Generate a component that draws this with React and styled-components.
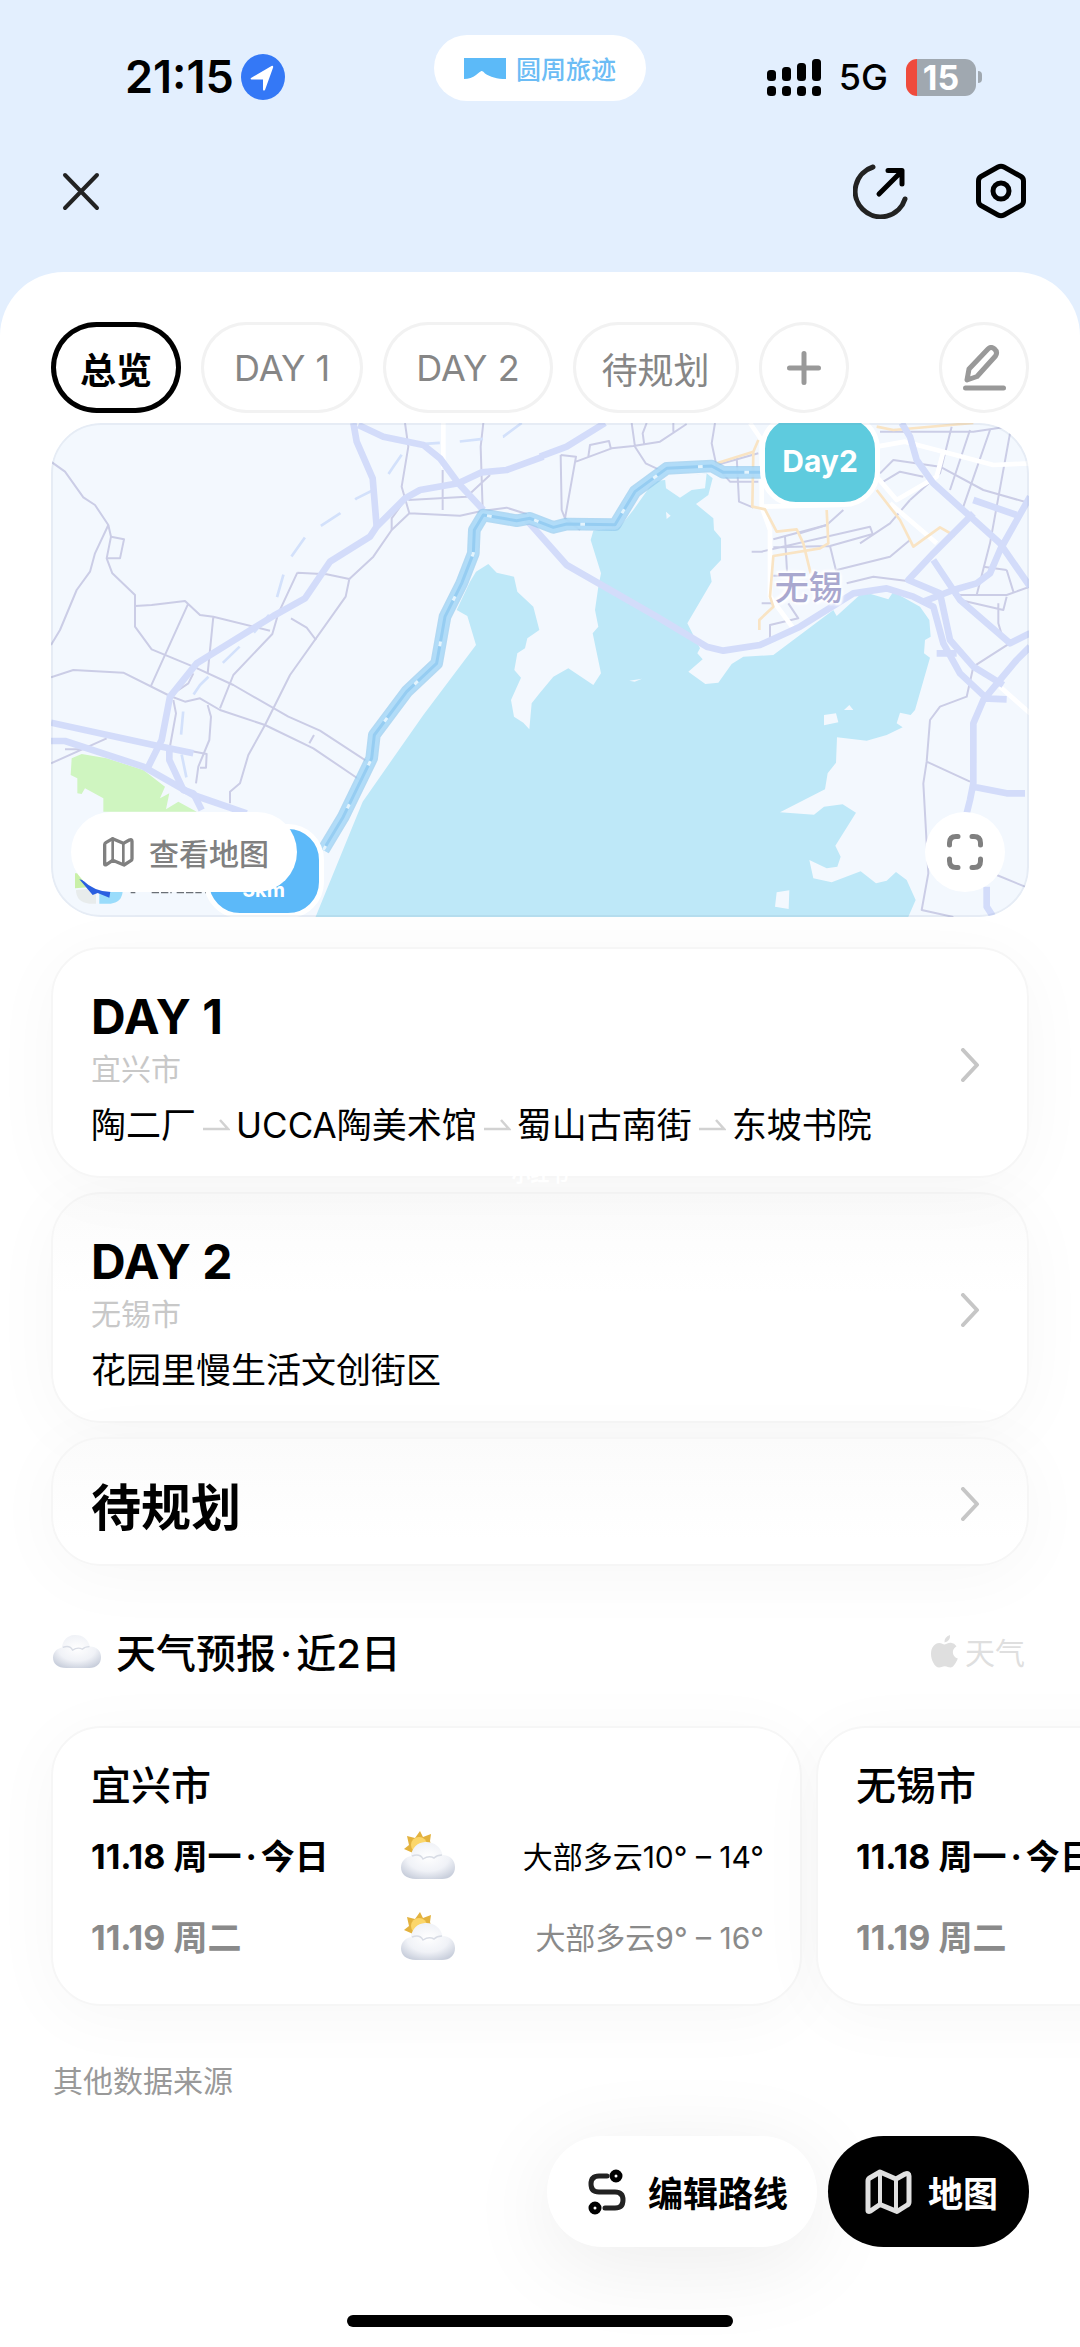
import React from "react";
import styled, { createGlobalStyle, css } from "styled-components";

const Global = createGlobalStyle`
  *, *::before, *::after { box-sizing: border-box; }
  body { margin: 0; background: #e3effe; }
  body, button {
    font-family: Inter, "Noto Sans CJK SC", sans-serif;
    color: #000;
  }
  button { border: 0; padding: 0; background: none; cursor: pointer; }
  h1, h2, h3, p, ul { margin: 0; padding: 0; }
  a { color: inherit; text-decoration: none; }
  svg { display: block; flex: none; }
`;

const Page = styled.div`
  overflow-x: clip;
  background: #e3effe;
`;

/* ---------- status bar ---------- */

const StatusBar = styled.div`
  display: grid;
  grid-template-columns: 1fr auto 1fr;
  align-items: center;
  height: 154px;
  padding: 0 98px;
`;

const StatusGroup = styled.div`
  display: flex;
  align-items: center;
  gap: ${(p) => p.$gap}px;
  padding-left: ${(p) => (p.$end ? 0 : 27)}px;
  justify-content: ${(p) => (p.$end ? "flex-end" : "flex-start")};
`;

const Clock = styled.span`
  font-size: 45px;
  font-weight: 600;
  line-height: 48px;
`;

const Network = styled.span`
  font-size: 36px;
  font-weight: 500;
  line-height: 40px;
`;

const Brand = styled.div`
  display: flex;
  align-self: start;
  align-items: center;
  gap: 10px;
  height: 66px;
  margin: 35px 0 0 0;
  padding: 0 30px;
  border-radius: 33px;
  background: #fff;
  color: #6bbcf5;
  font-size: 25px;
  font-weight: 500;
`;

const Battery = styled.div`
  display: flex;
  align-items: center;
  gap: 2px;
  &::after {
    content: "";
    width: 4px;
    height: 12px;
    border-radius: 0 6px 6px 0;
    background: #a0a8b0;
  }
`;

const BatteryBody = styled.span`
  width: 70px;
  height: 37px;
  border-radius: 11px;
  background: linear-gradient(90deg, #ef4b3c 11px, #a0a8b0 11px);
  color: #fff;
  font-size: 34px;
  font-weight: 700;
  line-height: 37px;
  text-align: center;
`;

/* ---------- header ---------- */

const Header = styled.header`
  display: flex;
  align-items: center;
  justify-content: space-between;
  height: 118px;
  padding: 0 54px 44px 60px;
`;

const HeaderActions = styled.div`
  display: flex;
  gap: 67px;
`;

const Sheet = styled.main`
  padding: 50px 51px 20px;
  border-radius: 64px 64px 0 0;
  background: #fff;
`;

const Tabs = styled.nav`
  display: flex;
  gap: 20px;
`;

const Tab = styled.button`
  display: flex;
  align-items: center;
  justify-content: center;
  height: 91px;
  min-width: 90px;
  padding: 0 ${(p) => (p.$icon ? 0 : p.$wide ? 33 : 29)}px;
  border-radius: 46px;
  box-shadow: inset 0 0 0 3px #f2f2f2;
  color: #868686;
  font-size: 36px;
  margin-left: ${(p) => (p.$push ? "auto" : 0)};
  ${(p) =>
    p.$active &&
    css`
      box-shadow: inset 0 0 0 5px #000;
      color: #000;
      font-weight: 700;
    `}
`;

/* ---------- map ---------- */

const MapBox = styled.section`
  position: relative;
  height: 494px;
  margin-top: 10px;
  border-radius: 50px;
  overflow: hidden;
  background: #f3f8fe;
  &::after {
    content: "";
    position: absolute;
    inset: 0;
    border: 2px solid rgba(120, 140, 170, 0.1);
    border-radius: inherit;
    pointer-events: none;
  }
`;

const MapSvg = styled.svg`
  width: 100%;
  height: 100%;
`;

const Pin = styled.div`
  position: absolute;
  left: ${(p) => p.$x};
  top: ${(p) => p.$y}px;
  width: 120px;
  height: 94px;
  border: 5px solid #fff;
  border-radius: 36px;
  background: ${(p) => p.$color};
  color: #fff;
  text-align: center;
  font-weight: 700;
  font-size: ${(p) => p.$size}px;
  line-height: ${(p) => p.$line}px;
`;

const MapLabel = styled.span`
  position: absolute;
  left: 74%;
  top: 140px;
  color: #a9a8cf;
  font-size: 34px;
  font-weight: 500;
  line-height: 50px;
  text-shadow: 0 0 4px #fff, 0 0 4px #fff, 0 0 6px #fff, 2px 2px 2px #fff, -2px -2px 2px #fff;
`;

const MapButton = styled.button`
  position: absolute;
  z-index: 1;
  bottom: 25px;
  display: flex;
  align-items: center;
  justify-content: center;
  gap: 15px;
  height: 80px;
  min-width: 80px;
  border-radius: 40px;
  background: #fff;
  color: #808080;
  font-size: 30px;
  font-weight: 500;
  ${(p) => (p.$right ? "right: 24px;" : "left: 20px; padding: 0 28px 0 31px;")}
`;

/* ---------- cards ---------- */

const surface = css`
  border: 2px solid #f6f6f6;
  border-radius: 50px;
  background: #fff;
  box-shadow: 0 10px 70px rgba(0, 0, 0, 0.035);
`;

const DayList = styled.div`
  display: flex;
  flex-direction: column;
  gap: 14px;
  margin-top: 30px;
`;

const DayCard = styled.a`
  ${surface}
  display: flex;
  align-items: center;
  justify-content: space-between;
  min-height: 129px;
  padding: 30px 47px 25px 38px;
  ${(p) => p.$shaded && "background: linear-gradient(#fbfbfb, #fff 100px);"}
`;

const DayBody = styled.div`
  padding-top: 8px;
`;

const DayTitle = styled.h2`
  font-size: ${(p) => (p.$cjk ? 50 : 48)}px;
  font-weight: 700;
  line-height: 60px;
`;

const City = styled.p`
  color: #c8c8c8;
  font-size: 30px;
  line-height: 44px;
`;

const Route = styled.p`
  display: flex;
  align-items: center;
  margin-top: 8px;
  font-size: 35px;
  line-height: 52px;
  svg { margin: 0 6px 0 7px; }
`;

const Watermark = styled.span`
  position: absolute;
  left: 0;
  right: 0;
  bottom: -8px;
  color: #fff;
  font-size: 19px;
  font-weight: 700;
  line-height: 20px;
  text-align: center;
`;

const Stamped = styled.div`
  position: relative;
`;

/* ---------- weather ---------- */

const WeatherHead = styled.div`
  display: flex;
  align-items: center;
  gap: 15px;
  height: 60px;
  margin-top: 55px;
  padding: 0 4px 0 2px;
`;

const WeatherTitle = styled.h2`
  font-size: 40px;
  font-weight: 500;
`;

const Dot = styled.span`
  margin: 0 4px;
`;

const Source = styled.span`
  display: flex;
  align-items: center;
  gap: 7px;
  margin-left: auto;
  color: #dfdfdf;
  font-size: 30px;
`;

const WeatherRow = styled.div`
  display: flex;
  gap: 14px;
  margin-top: 45px;
`;

const WeatherCard = styled.section`
  ${surface}
  flex: 0 0 751px;
  padding: 32px 36px 28px 38px;
`;

const WeatherCity = styled.h3`
  font-size: 40px;
  font-weight: 500;
  line-height: 52px;
`;

const Forecast = styled.table`
  width: 100%;
  margin-top: 2px;
  border-collapse: collapse;
  table-layout: fixed;
  tr { height: 81px; }
  th, td { padding: 0; white-space: nowrap; font-weight: 400; }
  th { text-align: left; font-size: 34px; font-weight: 700; }
  td { font-size: 30px; text-align: right; }
  td:nth-child(2) { width: 54px; }
`;

const ForecastLine = styled.tr`
  color: ${(p) => (p.$muted ? "#8a8a8a" : "#000")};
`;

const OtherSources = styled.a`
  display: block;
  margin-top: 53px;
  padding-left: 2px;
  color: #999;
  font-size: 30px;
  line-height: 44px;
`;

const FloatBar = styled.div`
  display: flex;
  justify-content: flex-end;
  gap: 11px;
  margin-top: 33px;
`;

const FloatButton = styled.button`
  display: flex;
  align-items: center;
  gap: ${(p) => (p.$dark ? 16 : 22)}px;
  height: 111px;
  padding: 0 ${(p) => (p.$dark ? "31px 0 36px" : "29px 0 41px")};
  border-radius: 56px;
  background: ${(p) => (p.$dark ? "#000" : "#fff")};
  color: ${(p) => (p.$dark ? "#fff" : "#000")};
  font-size: 35px;
  font-weight: 700;
  ${(p) => !p.$dark && "box-shadow: 0 16px 90px rgba(0, 0, 0, 0.08);"}
`;

const HomeBar = styled.div`
  width: 386px;
  height: 12px;
  margin: 68px auto 0;
  border-radius: 6px;
  background: #000;
`;

/* ---------- icons ---------- */

const line = (w) => ({
  fill: "none",
  stroke: "currentColor",
  strokeWidth: w,
  strokeLinecap: "round",
  strokeLinejoin: "round",
});

const LocationIcon = () => (
  <svg width="44" height="46" viewBox="0 0 44 46">
    <ellipse cx="22" cy="23" rx="22" ry="23" fill="#3478f6" />
    <path d="M10 24 30.500 12q2-.6 1.600 1.400L24 36q-1.600 1.400-2-.6V25.500H10.500q-1.400-.5-.5-1.500z" fill="#fff" />
  </svg>
);

const BrandIcon = () => (
  <svg width="42" height="21" viewBox="0 0 42 21">
    <path d="M0 0h42v21c-9 0-16-2-21-5.500q-2-3-3.500-2.500T12 17q-5 4-12 4z" fill="#5cbaf8" />
  </svg>
);

const SignalIcon = () => (
  <svg width="54" height="37" viewBox="0 0 54 37">
    {[11, 14, 18, 22].map((h, i) => (
      <g key={h}>
        <rect x={i * 15} y={22 - h} width="9" height={h} rx="3.500" />
        <rect x={i * 15} y="27" width="9" height="10" rx="3.500" />
      </g>
    ))}
  </svg>
);

const CloseIcon = () => (
  <svg width="42" height="42" viewBox="0 0 42 42" {...line(4)}>
    <path d="M5 5l32 33M37 5 5 38" stroke="#222" />
  </svg>
);

const ShareIcon = () => (
  <svg width="56" height="56" viewBox="0 0 56 56" {...line(5)}>
    <path d="M20 4A25.500 25.500 0 1 0 52 36" stroke="#222" />
    <path d="M26 31 49 8M35 7.500h14V21" />
  </svg>
);

const SettingsIcon = () => (
  <svg width="50" height="56" viewBox="0 0 50 56" {...line(5)}>
    <path d="M22 4q3-1.600 6 0l17 9.500q2.500 1.500 2.500 4.500v20q0 3-2.500 4.500L28 52q-3 1.600-6 0L5 42.500Q2.500 41 2.500 38V18q0-3 2.500-4.500z" />
    <circle cx="25" cy="28" r="8" />
  </svg>
);

const PlusIcon = () => (
  <svg width="34" height="34" viewBox="0 0 34 34" {...line(5)}>
    <path d="M17 2.500v29M2.500 17h29" stroke="#999" />
  </svg>
);

const PencilIcon = () => (
  <svg width="44" height="46" viewBox="0 0 44 46" {...line(5)}>
    <path d="M5 35l2-11L26 4q3-3 6.500 0t1 7L15 31.500z" stroke="#999" />
    <path d="M3.500 43h38" stroke="#999" />
  </svg>
);

const MapIcon = ({ size, color }) => (
  <svg width={size} height={size} viewBox="0 0 48 48" {...line(5)}>
    <g stroke={color}>
      <path d="M4 42.500V13q0-2 1.700-3L16 4l16 7 9-5q4-1.500 4 2v26q0 2-1.700 3L33 43.500l-17-7-9.500 6.500Q4 44 4 42.500z" />
      <path d="M16 4v32M32 11v32" strokeWidth="4" />
    </g>
  </svg>
);

const ExpandIcon = () => (
  <svg width="36" height="36" viewBox="0 0 36 36" {...line(5)}>
    <path d="M2.500 11V9q0-6.500 6.500-6.500h2M25 2.500h2q6.500 0 6.500 6.500v2M33.500 25v2q0 6.500-6.500 6.500h-2M11 33.500H9q-6.500 0-6.500-6.500v-2" />
  </svg>
);

const RouteIcon = () => (
  <svg width="38" height="46" viewBox="0 0 38 46" {...line(5)}>
    <path d="M19 7h-8q-8 0-8 8t8 8h16q8 0 8 8t-8 8H17" stroke="#222" />
    <circle cx="28" cy="7" r="4" />
    <circle cx="7" cy="39" r="4" />
  </svg>
);

const ChevronIcon = () => (
  <svg width="20" height="34" viewBox="0 0 20 34" {...line(4)}>
    <path d="M3 2l14 15L3 32" stroke="#c6c6c6" />
  </svg>
);

const HalfArrow = () => (
  <svg width="27" height="12" viewBox="0 0 27 12">
    <path d="M0 10h25L17 1" fill="none" stroke="#d2d2d2" strokeWidth="2.500" />
  </svg>
);

const AppleIcon = () => (
  <svg width="27" height="33" viewBox="0 0 27 33" fill="#dfdfdf">
    <path d="M19 0q.5 6-5.500 7.500Q13 2 19 0zM13.500 9.500C16 9 17 7.500 20 7.800q3.500.3 5.500 3.400c-5.500 3.300-4.500 10.300 1.300 12.400C25 28 22.500 32.500 19.500 32.500c-2.300 0-3-1.300-5.700-1.300s-3.500 1.300-5.600 1.300C3.500 32.500 0 24.500 0 19 0 12 4 8 8.200 8c2.500 0 3.800 1.300 5.300 1.500z" />
  </svg>
);

const CLOUD = "M15 48C5 48 0 43 0 36.500 0 30 5 26 10 25c1-8 6-13.500 14-14 9-.5 16 5 17.500 13C49 24 54 29 54 36c0 7.500-5 12-13 12z";

const CloudIcon = ({ id, sun }) => (
  <svg
    width={sun ? 54 : 48}
    height={sun ? 48 : 34}
    viewBox={sun ? "0 0 54 48" : "0 10 54 38"}
    aria-hidden="true"
  >
    <defs>
      <radialGradient id={id} cx=".5" cy=".4" r=".65">
        <stop offset="0" stopColor="#ffffff" />
        <stop offset=".6" stopColor="#f0f2f7" />
        <stop offset="1" stopColor="#c9cfdc" />
      </radialGradient>
    </defs>
    {sun && (
      <>
        <path
          d="M19 0l3 6 8-3-1 7 3 10-20 2-9-4 5-4-2-9 8 2z"
          fill="#e3b23e"
        />
        <circle cx="18" cy="14" r="8" fill="#fbd66a" />
      </>
    )}
    <path d={CLOUD} fill={`url(#${id})`} />
    <path d="M11 25q8-3 11 3 6-4 11-1 3-3 8-3" fill="none" stroke="#d8dce5" strokeWidth="1.500" />
  </svg>
);

/* ---------- map drawing ---------- */

const WATER =
  "M1345 462L1308 485 1290 515 1250 600 1282 618 1308 705 1150 915 968 1175 825 1525H2603L2627 1470 2600 1410 2568 1386 2540 1412 2508 1420 2462 1384 2375 1417 2320 1405 2308 1350 2360 1375 2392 1370 2402 1340 2386 1307 2448 1208 2408 1183 2352 1190 2322 1214 2220 1207 2355 1138 2363 1090 2388 1058 2391 982 2480 992 2540 975 2588 952 2570 940 2580 908 2612 915 2625 900 2670 743 2652 730 2655 690 2672 680 2668 630 2640 590 2560 545 2545 568 2470 545 2390 618 2380 600 2200 735 2110 740 2075 762 2035 818 1996 822 1945 785 1988 748 1972 730 1980 715 1942 640 2015 515 2010 485 2043 450V385L2022 360 2020 325 1968 282 2005 255 2018 205 2000 190 1840 215 1780 300 1740 350 1660 362 1652 390 1683 490 1675 530 1665 600 1675 650 1658 670 1683 790 1660 825 1585 775 1540 800 1500 848 1475 880 1468 958 1450 938 1422 920 1413 870 1443 803 1423 780 1432 730 1455 715 1462 685 1498 660 1480 590 1432 545 1422 500 1370 488z";

const ISLANDS =
  "M1875 205L2000 190 1995 235 1955 240 1920 263 1878 235zM2352 915L2388 910 2395 937 2352 946zM2412 900L2428 885 2440 900zM2210 1447L2248 1441 2246 1497 2205 1490zM1878 305l14 12-12 10zM1768 812l38-6-22 9z";

const THIN_ROADS = [
  "M33 155L75 185 130 262 165 285 205 345 213 380 200 445 217 490 285 555V650L335 718 460 770 580 825 745 920 840 962 990 1060",
  "M213 380L252 388 240 445H200M205 345L165 430 150 485 110 540 60 660 33 705",
  "M285 588L335 585 435 573 480 615 520 620 690 662M445 580L332 830M520 620L503 790",
  "M33 802L100 780 250 788 390 858 435 875 480 865 540 900 675 945 820 1015 960 1110",
  "M772 488L860 493 928 507M772 488L715 610 697 672 580 795 540 895M928 507L917 560 750 795 675 945 625 1035 600 1120 570 1145V1180",
  "M928 507L1000 440 1055 360 1108 310 1260 317 1325 303 1400 293 1460 312M1108 310L1085 230 1105 110 1095 39",
  "M1105 270L1280 260 1350 195M1208 180V300M1330 39L1322 110 1328 300M753 625L800 653 828 690",
  "M33 1060L200 985M75 1018H150M385 1010L500 1032 498 1073H480M503 885L513 920 508 990 475 1070 468 1120",
  "M400 870L408 910 388 1020M460 790L445 820 400 850M822 975L808 1000M1055 360V325L1095 270",
];

const THIN_ROADS_RIGHT = [
  "M62 135L108 140 75 325M62 135L65 300 75 325 120 360M108 155L215 115 280 108 360 95 440 42M145 140L150 105 207 93 213 118M275 39L285 110 317 160 370 185M320 39L308 70 313 105M400 39V65",
  "M525 39L515 100 530 170 570 215H655M590 140L597 275 640 293M530 165L655 130",
  "M635 425H665L990 350 998 372 870 408 700 412M700 388L860 345M735 380L742 500M870 408L890 490M700 497H720M665 580H700",
  "M890 480L1050 440 1110 390M920 520L1000 500 1120 515 1200 545M690 685V645L775 625 745 580",
  "M1020 65H1300L1400 50M1235 50L1200 190 1110 270M1290 60L1230 240M1350 60L1270 290M1410 70L1350 400 1310 555",
  "M1020 190L1060 150 1200 170 1330 240 1470 280M1030 215L1080 185 1150 200M1110 270L1050 340 960 400M910 300L860 345 780 370",
  "M1240 555H1400L1470 530M1400 480L1420 545M1330 470L1400 480M1260 570L1390 600 1400 560M1375 580V640L1390 690",
  "M1300 770L1440 680M1300 770L1280 860 1200 890 1170 930 1160 1055 1150 1120 1165 1390 1145 1500 1240 1521M1160 1055L1290 1115M1370 1395L1455 1430",
];

const MAIN_ROADS = [
  "M940 39L950 95 998 205 1010 350M955 45L1030 80 1150 105 1200 145 1255 220 1330 300",
  "M1510 140L1400 180 1325 187 1255 220 1140 240 1095 265 1010 350 990 380 870 455 795 565 700 618 470 760 390 860 365 990 325 1070",
  "M33 938L340 1005 460 1030M33 993H75L310 1070 460 1155 620 1210",
  "M388 1020V1050L430 1140 460 1150 485 1200",
  "M1460 330L1500 375 1580 465 1850 620 2000 710 2050 722 2160 705 2280 650 2440 550 2540 535 2620 560 2680 590 2710 700 2760 790 2840 865",
  "M1500 140L1580 110 1695 39",
];

const MAIN_ROADS_RIGHT = [
  "M1085 39L1110 80 1130 150 1180 220 1280 310 1380 400 1470 530M1470 260L1380 420 1350 490 1310 520 1240 540 1150 575",
  "M1300 270L1430 315M1300 310L1180 430 1105 510 1200 550 1230 690 1300 770 1390 825",
  "M1470 670L1410 700 1260 570 1180 450M1470 710L1430 750 1330 870 1300 940V1120L1290 1170 1280 1210M1300 1130L1400 1150H1455M1190 730H1250M1340 1430V1490L1360 1521M1330 865L1400 868",
];

const ROUTE =
  "M850 1320L910 1220 995 1045 1003 975 1100 845 1190 760 1215 620 1265 520 1300 430 1303 360 1330 315 1430 332 1470 325 1540 352 1580 342 1725 344 1785 245 1880 175 2015 168 2050 187 2170 187";

const MapDrawing = () => (
  <MapSvg viewBox="33 39 2934 1482" preserveAspectRatio="xMidYMid slice" role="img" aria-label="路线地图">
    <path d={WATER} fill="#bee8f8" />
    <path d={ISLANDS} fill="#f3f8fe" />
    <path
      d="M95 1045L125 1032 200 1045 310 1080 375 1130 360 1165 388 1150 378 1198 415 1175 470 1205H190V1165L135 1135 125 1152 112 1150V1105L92 1095z"
      fill="#cff5c0"
    />
    <g fill="none" strokeLinejoin="round">
      <g stroke="#cbcde6" strokeWidth="6">
        {THIN_ROADS.map((d) => <path key={d} d={d} />)}
        <g transform="translate(1500 0)">
          {THIN_ROADS_RIGHT.map((d) => <path key={d} d={d} />)}
        </g>
      </g>
      <path
        d="M1445 39L1390 80 1255 95 1105 105 1060 170 1020 230 950 265 900 310 800 375 740 460 700 600 640 670 480 825 430 900 420 1010 445 1130"
        stroke="#d3e1fb"
        strokeWidth="8"
        strokeDasharray="70 60"
      />
      <g stroke="#fff" strokeWidth="14">
        <path d="M1210 39V175" />
        <g transform="translate(1500 0)">
          <path d="M630 39L665 90V290L690 360V560L760 655M665 290L900 285M1010 110L1095 95 1210 125 1360 165 1470 160M1210 125L1190 200 1070 270 1010 200M1050 280L1190 400M1380 830L1470 910" />
        </g>
      </g>
      <g stroke="#f9e4c4" strokeWidth="8" transform="translate(1500 0)">
        <path d="M530 160L640 125 655 90M640 125L637 290 675 298 710 365 770 358 790 400 812 490M860 300L865 400 840 415 700 438 690 560 700 590 658 630V660M1010 240L1080 330 1120 410 1200 352 1245 378M1010 50L1060 60 1300 39" />
      </g>
      <g stroke="#d3dcfa" strokeWidth="20">
        {MAIN_ROADS.map((d) => <path key={d} d={d} />)}
        <g transform="translate(1500 0)">
          {MAIN_ROADS_RIGHT.map((d) => <path key={d} d={d} />)}
        </g>
      </g>
      <path d={ROUTE} stroke="#8fc8ec" strokeOpacity=".65" strokeWidth="38" />
      <path d={ROUTE} stroke="#b0dcf8" strokeOpacity=".85" strokeWidth="30" />
      <path d={ROUTE} stroke="#96cdf2" strokeWidth="9" />
      <path d={ROUTE} stroke="#e4f4fd" strokeWidth="9" strokeDasharray="14 130" />
    </g>
    <path d="M105 1390h60v40l-60 5z" fill="#c9f0a8" />
    <path d="M108 1440l60-5v46h-20q-40-5-40-41z" fill="#e8ecec" />
    <path d="M178 1440h70q0 36-36 41h-34z" fill="#9adcfb" />
    <path d="M118 1408l95 25-5 30-35-14-15 6z" fill="#2a5fe0" />
    <path d="M272 1447h14M335 1447h60M410 1447h75M495 1447h120" stroke="#6a6f76" strokeWidth="6" strokeDasharray="22 6" />
  </MapSvg>
);

/* ---------- data ---------- */

const FORECAST = [
  { date: "11.18 周一", today: true, text: "大部多云10° – 14°" },
  { date: "11.19 周二", text: "大部多云9° – 16°" },
];

const CITIES = [
  { id: "yixing", name: "宜兴市" },
  { id: "wuxi", name: "无锡市" },
];

const STOPS = ["陶二厂", "UCCA陶美术馆", "蜀山古南街", "东坡书院"];

export default function App() {
  return (
    <Page>
      <Global />
      <StatusBar>
        <StatusGroup $gap={7}>
          <Clock>21:15</Clock>
          <LocationIcon />
        </StatusGroup>
        <Brand>
          <BrandIcon />
          圆周旅迹
        </Brand>
        <StatusGroup $gap={18} $end>
          <SignalIcon />
          <Network>5G</Network>
          <Battery>
            <BatteryBody>15</BatteryBody>
          </Battery>
        </StatusGroup>
      </StatusBar>

      <Header>
        <button aria-label="关闭"><CloseIcon /></button>
        <HeaderActions>
          <button aria-label="分享"><ShareIcon /></button>
          <button aria-label="设置"><SettingsIcon /></button>
        </HeaderActions>
      </Header>

      <Sheet>
        <Tabs>
          <Tab $active>总览</Tab>
          <Tab $wide>DAY 1</Tab>
          <Tab $wide>DAY 2</Tab>
          <Tab>待规划</Tab>
          <Tab $icon aria-label="添加"><PlusIcon /></Tab>
          <Tab $icon $push aria-label="编辑"><PencilIcon /></Tab>
        </Tabs>

        <MapBox>
          <MapDrawing />
          <MapLabel>无锡</MapLabel>
          <Pin $x="72.5%" $y={-10} $color="#5ecbde" $size={30} $line={86}>Day2</Pin>
          <Pin $x="15.6%" $y={401} $color="#5cb9f9" $size={20} $line={122}>3km</Pin>
          <MapButton>
            <MapIcon size={32} color="#808080" />
            查看地图
          </MapButton>
          <MapButton $right aria-label="全屏"><ExpandIcon /></MapButton>
        </MapBox>

        <DayList>
          <Stamped>
            <DayCard href="#day1">
              <DayBody>
                <DayTitle>DAY 1</DayTitle>
                <City>宜兴市</City>
                <Route>
                  {STOPS.map((stop, i) => (
                    <React.Fragment key={stop}>
                      {i > 0 && <HalfArrow />}
                      <span>{stop}</span>
                    </React.Fragment>
                  ))}
                </Route>
              </DayBody>
              <ChevronIcon />
            </DayCard>
            <Watermark>小红书</Watermark>
          </Stamped>
          <DayCard href="#day2" $shaded>
            <DayBody>
              <DayTitle>DAY 2</DayTitle>
              <City>无锡市</City>
              <Route>花园里慢生活文创街区</Route>
            </DayBody>
            <ChevronIcon />
          </DayCard>
          <DayCard href="#unplanned" $shaded>
            <DayBody>
              <DayTitle $cjk>待规划</DayTitle>
            </DayBody>
            <ChevronIcon />
          </DayCard>
        </DayList>

        <WeatherHead>
          <CloudIcon id="cloud-title" />
          <WeatherTitle>天气预报<Dot>·</Dot>近2日</WeatherTitle>
          <Source><AppleIcon />天气</Source>
        </WeatherHead>

        <WeatherRow>
          {CITIES.map((city) => (
            <WeatherCard key={city.id}>
              <WeatherCity>{city.name}</WeatherCity>
              <Forecast>
                <tbody>
                  {FORECAST.map((f, i) => (
                    <ForecastLine key={f.date} $muted={!f.today}>
                      <th scope="row">
                        {f.date}
                        {f.today && <><Dot>·</Dot>今日</>}
                      </th>
                      <td><CloudIcon sun id={`cloud-${city.id}-${i}`} /></td>
                      <td>{f.text}</td>
                    </ForecastLine>
                  ))}
                </tbody>
              </Forecast>
            </WeatherCard>
          ))}
        </WeatherRow>

        <OtherSources href="#sources">其他数据来源</OtherSources>

        <FloatBar>
          <FloatButton>
            <RouteIcon />
            编辑路线
          </FloatButton>
          <FloatButton $dark>
            <MapIcon size={48} color="#e0e0e0" />
            地图
          </FloatButton>
        </FloatBar>
        <HomeBar />
      </Sheet>
    </Page>
  );
}
